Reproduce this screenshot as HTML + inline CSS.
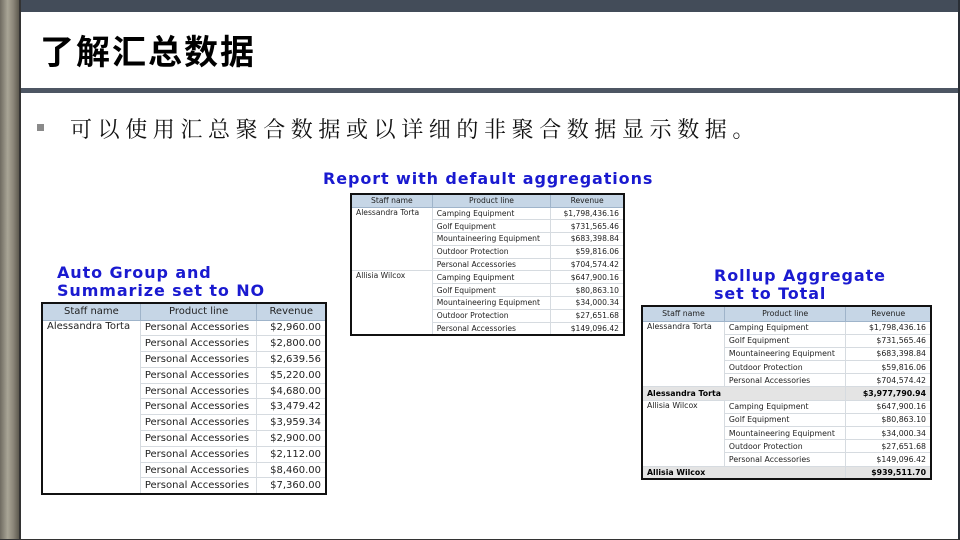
<!DOCTYPE html>
<html><head><meta charset="utf-8"><style>
*{margin:0;padding:0;box-sizing:border-box}
body{width:960px;height:540px;position:relative;background:#fff;overflow:hidden;font-family:"Liberation Sans","Noto Sans CJK SC",sans-serif}
.strip{position:absolute;left:0;top:0;width:19px;height:540px;background:linear-gradient(90deg,#6e6a60,#a9a596 40%,#8b8679 70%,#5d594f);}
.strip2{position:absolute;left:19px;top:0;width:2px;height:540px;background:#333}
.topbar{position:absolute;left:21px;top:0;width:939px;height:12px;background:#434c59}
.midbar{position:absolute;left:21px;top:88px;width:939px;height:5px;background:#4d5663}
.rline{position:absolute;right:0;top:0;width:2px;height:540px;background:#2a2f36}
.bline{position:absolute;left:0;bottom:0;width:960px;height:1px;background:#333}
.title{position:absolute;left:40px;top:25px;font-size:34px;font-weight:bold;color:#000;font-family:"Noto Sans CJK SC",sans-serif;letter-spacing:2px}
.bul{position:absolute;left:37px;top:124px;width:7px;height:7px;background:#8a8a8a}
.btxt{position:absolute;left:70px;top:113px;font-size:22px;color:#111;font-family:"Noto Serif CJK SC","Noto Sans CJK SC",serif;letter-spacing:5.6px}
.h{position:absolute;color:#1a1ad0;font-weight:bold;font-family:"DejaVu Sans",sans-serif;font-size:16px;line-height:18px;letter-spacing:0.9px}
table{position:absolute;border-collapse:collapse;border:2px solid #111;background:#fff;font-family:"DejaVu Sans",sans-serif;color:#222}
td,th{border:1px solid #d6dbe0;white-space:nowrap;overflow:hidden;font-weight:normal}
th{background:#c6d6e6;border:1px solid #9fb4ca;text-align:center}
td.r{text-align:right}
td.s{border-bottom:none;border-top:none;vertical-align:top}
tr.tot td{background:#e4e4e4;font-weight:bold;color:#000}
#t1{left:41px;top:302px;width:286px;font-size:10px}
#t1 th{height:17px}#t1 td{height:15.8px;padding:0 4px}
#t2{left:350px;top:193px;width:275px;font-size:7.6px}
#t2 th{height:13px}#t2 td{height:12.8px;padding:0 4px}
#t3{left:641px;top:305px;width:291px;font-size:7.8px}
#t3 th{height:15px}#t3 td{height:13.2px;padding:0 4px}
</style></head><body>
<div class="strip"></div><div class="strip2"></div>
<div class="topbar"></div><div class="midbar"></div><div class="rline"></div><div class="bline"></div>
<div class="title">了解汇总数据</div>
<div class="bul"></div>
<div class="btxt">可以使用汇总聚合数据或以详细的非聚合数据显示数据。</div>

<div class="h" style="left:323px;top:170px">Report with default aggregations</div>
<div class="h" style="left:57px;top:264px">Auto Group and<br>Summarize set to NO</div>
<div class="h" style="left:714px;top:267px">Rollup Aggregate<br>set to Total</div>

<table id="t1">
<colgroup><col style="width:99px"><col style="width:117px"><col style="width:70px"></colgroup>
<tr><th>Staff name</th><th>Product line</th><th>Revenue</th></tr>
<tr><td class="s" rowspan="11">Alessandra Torta</td><td>Personal Accessories</td><td class="r">$2,960.00</td></tr>
<tr><td>Personal Accessories</td><td class="r">$2,800.00</td></tr>
<tr><td>Personal Accessories</td><td class="r">$2,639.56</td></tr>
<tr><td>Personal Accessories</td><td class="r">$5,220.00</td></tr>
<tr><td>Personal Accessories</td><td class="r">$4,680.00</td></tr>
<tr><td>Personal Accessories</td><td class="r">$3,479.42</td></tr>
<tr><td>Personal Accessories</td><td class="r">$3,959.34</td></tr>
<tr><td>Personal Accessories</td><td class="r">$2,900.00</td></tr>
<tr><td>Personal Accessories</td><td class="r">$2,112.00</td></tr>
<tr><td>Personal Accessories</td><td class="r">$8,460.00</td></tr>
<tr><td>Personal Accessories</td><td class="r">$7,360.00</td></tr>
</table>

<table id="t2">
<colgroup><col style="width:82px"><col style="width:119px"><col style="width:74px"></colgroup>
<tr><th>Staff name</th><th>Product line</th><th>Revenue</th></tr>
<tr><td class="s" rowspan="5">Alessandra Torta</td><td>Camping Equipment</td><td class="r">$1,798,436.16</td></tr>
<tr><td>Golf Equipment</td><td class="r">$731,565.46</td></tr>
<tr><td>Mountaineering Equipment</td><td class="r">$683,398.84</td></tr>
<tr><td>Outdoor Protection</td><td class="r">$59,816.06</td></tr>
<tr><td>Personal Accessories</td><td class="r">$704,574.42</td></tr>
<tr><td class="s" rowspan="5" style="border-top:1px solid #d6dbe0">Allisia Wilcox</td><td>Camping Equipment</td><td class="r">$647,900.16</td></tr>
<tr><td>Golf Equipment</td><td class="r">$80,863.10</td></tr>
<tr><td>Mountaineering Equipment</td><td class="r">$34,000.34</td></tr>
<tr><td>Outdoor Protection</td><td class="r">$27,651.68</td></tr>
<tr><td>Personal Accessories</td><td class="r">$149,096.42</td></tr>
</table>

<table id="t3">
<colgroup><col style="width:83px"><col style="width:122px"><col style="width:86px"></colgroup>
<tr><th>Staff name</th><th>Product line</th><th>Revenue</th></tr>
<tr><td class="s" rowspan="5">Alessandra Torta</td><td>Camping Equipment</td><td class="r">$1,798,436.16</td></tr>
<tr><td>Golf Equipment</td><td class="r">$731,565.46</td></tr>
<tr><td>Mountaineering Equipment</td><td class="r">$683,398.84</td></tr>
<tr><td>Outdoor Protection</td><td class="r">$59,816.06</td></tr>
<tr><td>Personal Accessories</td><td class="r">$704,574.42</td></tr>
<tr class="tot"><td colspan="2">Alessandra Torta</td><td class="r">$3,977,790.94</td></tr>
<tr><td class="s" rowspan="5">Allisia Wilcox</td><td>Camping Equipment</td><td class="r">$647,900.16</td></tr>
<tr><td>Golf Equipment</td><td class="r">$80,863.10</td></tr>
<tr><td>Mountaineering Equipment</td><td class="r">$34,000.34</td></tr>
<tr><td>Outdoor Protection</td><td class="r">$27,651.68</td></tr>
<tr><td>Personal Accessories</td><td class="r">$149,096.42</td></tr>
<tr class="tot"><td colspan="2">Allisia Wilcox</td><td class="r">$939,511.70</td></tr>
</table>
</body></html>
